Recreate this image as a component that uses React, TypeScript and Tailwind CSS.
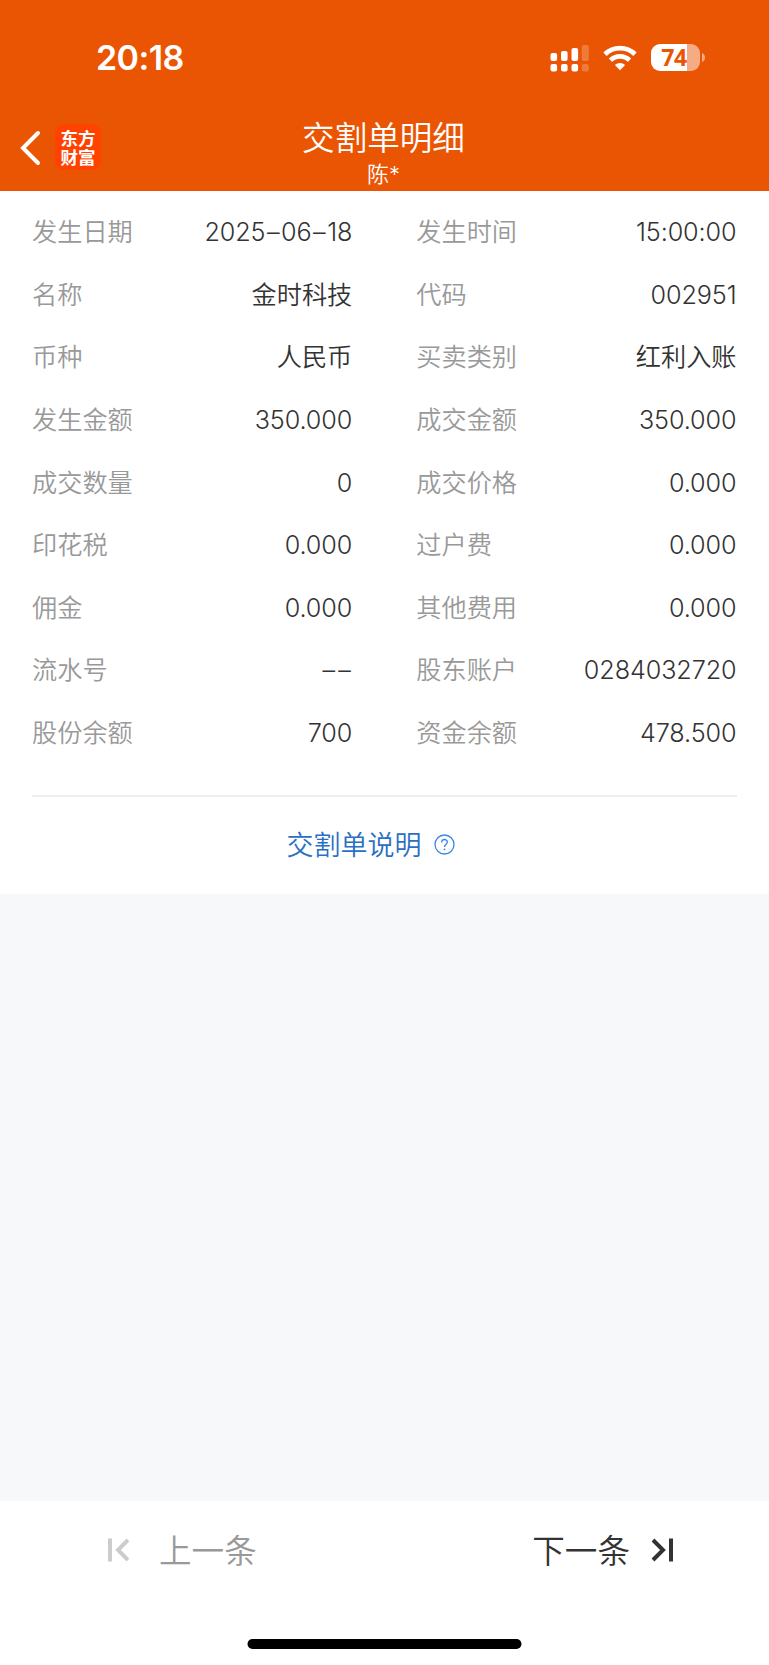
import { Fragment } from 'react'

const ROWS = [
  ['发生日期', '2025–06–18', '发生时间', '15:00:00'],
  ['名称', '金时科技', '代码', '002951'],
  ['币种', '人民币', '买卖类别', '红利入账'],
  ['发生金额', '350.000', '成交金额', '350.000'],
  ['成交数量', '0', '成交价格', '0.000'],
  ['印花税', '0.000', '过户费', '0.000'],
  ['佣金', '0.000', '其他费用', '0.000'],
  ['流水号', '––', '股东账户', '0284032720'],
  ['股份余额', '700', '资金余额', '478.500'],
]

function SignalIcon() {
  return (
    <svg width="39" height="28" viewBox="0 0 39 28" fill="#fff">
      <rect x="0.5" y="9" width="6.6" height="8" rx="2" />
      <rect x="11" y="7" width="6.6" height="10" rx="2" />
      <rect x="21.5" y="4" width="6.6" height="13" rx="2" />
      <rect x="0.5" y="20" width="6.6" height="7.5" rx="2" />
      <rect x="11" y="20" width="6.6" height="7.5" rx="2" />
      <rect x="21.5" y="20" width="6.6" height="7.5" rx="2" />
      <g opacity="0.22">
        <rect x="31.8" y="1" width="7" height="16" rx="2" />
        <rect x="31.8" y="20" width="7" height="7.5" rx="2" />
      </g>
    </svg>
  )
}

function WifiIcon() {
  return (
    <svg width="34" height="26" viewBox="0 0 34 26" fill="none" stroke="#fff" strokeWidth="4.8">
      <path d="M2 9.2 A21.5 21.5 0 0 1 32 9.2" />
      <path d="M7.5 15.3 A13.6 13.6 0 0 1 26.5 15.3" />
      <path d="M17 25.2 L11.9 20 A7.4 7.4 0 0 1 22.1 20 Z" fill="#fff" stroke="none" />
    </svg>
  )
}

function Battery() {
  return (
    <div className="flex items-center gap-[2px]">
      <div className="flex h-[27px] w-[49px] items-center justify-center rounded-[9px] bg-linear-to-r from-white from-74% to-[#f5ab83] to-74% pr-[3px]">
        <span className="font-['Open_Sans'] text-[23px] leading-none font-bold tracking-[-0.5px] text-[#ea5504]">74</span>
      </div>
      <svg width="3" height="9" viewBox="0 0 3 9" fill="#f5ab83">
        <path d="M0 0 Q3 1.5 3 4.5 Q3 7.5 0 9 Z" />
      </svg>
    </div>
  )
}

// dashes sit a little wider apart than the digits
function Value({ text }: { text: string }) {
  const isNumber = /^[\d.:–]+$/.test(text)
  if (!isNumber) return <span className="text-[25.2px] font-[350] text-[#333]">{text}</span>
  return (
    <span className="text-[25.2px] font-[350] tracking-[-0.1px] text-[#333]">
      {text.split(/(–)/).map((part, i) => (
        <Fragment key={i}>
          {part === '–' ? <span className="px-[1.5px] tracking-normal">–</span> : part}
        </Fragment>
      ))}
    </span>
  )
}

function Cell({ label, value }: { label: string; value: string }) {
  return (
    <div className="flex h-[62.6px] items-center justify-between">
      <span className="text-[25.2px] font-[350] text-[#999]">{label}</span>
      <Value text={value} />
    </div>
  )
}

export default function App() {
  return (
    <div className="flex h-[1665px] w-[769px] flex-col bg-[#f7f8fa] font-[Inter,'Noto_Sans_CJK_SC',sans-serif] leading-none">
      <header className="h-[191px] bg-[#ea5504] text-white">
        <div className="flex h-[115px] items-center justify-between pr-[64px] pl-[96px]">
          <span className="text-[34px] font-semibold tracking-[-0.6px]">20:18</span>
          <div className="flex items-center gap-[14px]">
            <SignalIcon />
            <WifiIcon />
            <Battery />
          </div>
        </div>
        <div className="grid h-[76px] grid-cols-[1fr_auto_1fr]">
          <div className="flex items-start gap-[14px] pt-[9px] pl-5">
            <svg className="mt-[6px]" width="21" height="36" viewBox="0 0 21 36" fill="none" stroke="#fff" strokeWidth="4" strokeLinecap="round">
              <path d="M18 3 L3 18 L18 33" />
            </svg>
            <div className="flex h-[46px] w-[46px] items-center justify-center rounded-[9px] bg-[#ff4200]">
              <p className="w-[36px] text-center font-['Noto_Sans_CJK_SC'] text-[17.5px] leading-[19px] font-bold">
                东方财富
              </p>
            </div>
          </div>
          <div className="flex flex-col items-center pr-[2px]">
            <h1 className="mt-[7px] text-[32.6px] leading-[33px] font-[350]">交割单明细</h1>
            <p className="mt-[8px] text-[22px] leading-[22px] font-[350]">陈*</p>
          </div>
          <div />
        </div>
      </header>

      <main className="h-[703px] bg-white px-8 pt-[10.6px]">
        <div className="grid grid-cols-2 gap-x-[64px] pr-[0.5px]">
          {ROWS.flatMap(([l1, v1, l2, v2]) => [
            <Cell key={l1} label={l1} value={v1} />,
            <Cell key={l2} label={l2} value={v2} />,
          ])}
        </div>
        <div className="mt-[30px] h-[2px] bg-[#eee]" />
        <div className="flex h-[98px] items-center justify-center gap-3 pr-[28px]">
          <span className="text-[27px] font-[350] text-[#2a6fc4]">交割单说明</span>
          <svg className="-mt-[2px]" width="21" height="21" viewBox="0 0 21 21" fill="none" stroke="#3d87e8" strokeWidth="1.3">
            <circle cx="10.5" cy="10.5" r="9.5" />
            <path d="M7.6 8.4 C7.6 4.6 13.4 4.6 13.4 8.1 C13.4 10.2 10.5 10.2 10.5 13" />
            <circle cx="10.5" cy="15.4" r="0.9" fill="#3d87e8" stroke="none" />
          </svg>
        </div>
      </main>

      <footer className="mt-auto flex h-[164px] flex-col justify-between bg-white pb-4">
        <div className="flex h-[98px] items-center justify-between pr-24 pl-[107px]">
          <button className="flex items-center gap-[30px] text-[32.6px] font-[350] text-[#999]">
            <svg width="22" height="24" viewBox="0 0 22 24" fill="none" stroke="#ccc" strokeWidth="4">
              <path d="M3 0.5 V23.5 M21 2 L11 12 L21 22" />
            </svg>
            <span className="pt-[2px]">上一条</span>
          </button>
          <button className="flex items-center gap-[21px] text-[32.6px] font-[350] text-[#333]">
            <span className="pt-[2px]">下一条</span>
            <svg width="22" height="24" viewBox="0 0 22 24" fill="none" stroke="#333" strokeWidth="4">
              <path d="M20 0.5 V23.5 M2 2 L12 12 L2 22" />
            </svg>
          </button>
        </div>
        <div className="mx-auto h-[10px] w-[274px] -translate-x-[0.5px] rounded-full bg-black" />
      </footer>
    </div>
  )
}
